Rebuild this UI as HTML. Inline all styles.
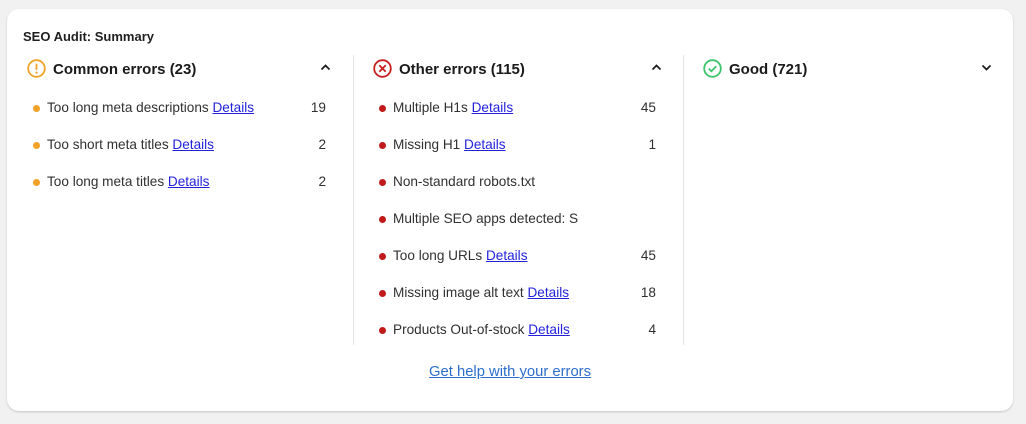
<!DOCTYPE html>
<html><head><style>
body{margin:0;width:1026px;height:424px;background:#f1f1f2;font-family:"Liberation Sans",sans-serif;color:#303030;position:relative;overflow:hidden}
.card{position:absolute;left:7px;top:9px;width:1006px;height:402px;background:#fff;border-radius:12px;box-shadow:0 1px 2px rgba(0,0,0,.18)}
.a{position:absolute;white-space:nowrap}
.t{left:23px;top:29px;font-size:13px;font-weight:bold;color:#1f1f1f}
.h{font-size:15px;font-weight:bold;color:#1a1a1a;top:61px}
.i{font-size:13.6px;color:#303030}
.i a,.lk{color:#2222dd;text-decoration:underline}
.d{position:absolute;width:7px;height:7px;border-radius:50%}
.n{font-size:13.6px;color:#303030;text-align:right;width:30px}
.v{position:absolute;width:1px;background:#e3e3e3;top:55px;height:290px}
svg{position:absolute}
</style></head><body>
<div class="card"></div>
<div class="a t">SEO Audit: Summary</div>
<div class="v" style="left:353px"></div><div class="v" style="left:683px"></div>

<svg style="left:27px;top:59px" width="19" height="19" viewBox="0 0 19 19"><circle cx="9.5" cy="9.5" r="8.3" fill="none" stroke="#f0a326" stroke-width="1.8"/><rect x="8.6" y="4.5" width="1.8" height="6.5" rx=".9" fill="#f0a326"/><circle cx="9.5" cy="13.6" r="1.1" fill="#f0a326"/></svg>
<div class="a h" style="left:53px">Common errors (23)</div>
<svg style="left:320px;top:63px" width="11" height="8" viewBox="0 0 11 8"><path d="M1.5 6.5L5.5 2.5L9.5 6.5" fill="none" stroke="#1a1a1a" stroke-width="1.7"/></svg>

<svg style="left:373px;top:59px" width="19" height="19" viewBox="0 0 19 19"><circle cx="9.5" cy="9.5" r="8.3" fill="none" stroke="#c81f1f" stroke-width="1.8"/><path d="M6.3 6.3L12.7 12.7M12.7 6.3L6.3 12.7" stroke="#c81f1f" stroke-width="1.8"/></svg>
<div class="a h" style="left:399px">Other errors (115)</div>
<svg style="left:651px;top:63px" width="11" height="8" viewBox="0 0 11 8"><path d="M1.5 6.5L5.5 2.5L9.5 6.5" fill="none" stroke="#1a1a1a" stroke-width="1.7"/></svg>

<svg style="left:703px;top:59px" width="19" height="19" viewBox="0 0 19 19"><circle cx="9.5" cy="9.5" r="8.3" fill="none" stroke="#3cc46a" stroke-width="1.8"/><path d="M5.8 9.7L8.4 12.2L13.2 7.2" fill="none" stroke="#3cc46a" stroke-width="1.8"/></svg>
<div class="a h" style="left:729px">Good (721)</div>
<svg style="left:981px;top:64px" width="11" height="8" viewBox="0 0 11 8"><path d="M1.5 1.5L5.5 5.5L9.5 1.5" fill="none" stroke="#1a1a1a" stroke-width="1.7"/></svg>

<div class="d" style="left:33px;top:105px;background:#f0a326"></div><div class="a i" style="left:47px;top:100px">Too long meta descriptions <a>Details</a></div><div class="a n" style="left:296px;top:100px">19</div>
<div class="d" style="left:33px;top:142px;background:#f0a326"></div><div class="a i" style="left:47px;top:137px">Too short meta titles <a>Details</a></div><div class="a n" style="left:296px;top:137px">2</div>
<div class="d" style="left:33px;top:179px;background:#f0a326"></div><div class="a i" style="left:47px;top:174px">Too long meta titles <a>Details</a></div><div class="a n" style="left:296px;top:174px">2</div>

<div class="d" style="left:379px;top:105px;background:#c01a1a"></div><div class="a i" style="left:393px;top:100px">Multiple H1s <a>Details</a></div><div class="a n" style="left:626px;top:100px">45</div>
<div class="d" style="left:379px;top:142px;background:#c01a1a"></div><div class="a i" style="left:393px;top:137px">Missing H1 <a>Details</a></div><div class="a n" style="left:626px;top:137px">1</div>
<div class="d" style="left:379px;top:179px;background:#c01a1a"></div><div class="a i" style="left:393px;top:174px">Non-standard robots.txt</div>
<div class="d" style="left:379px;top:216px;background:#c01a1a"></div><div class="a i" style="left:393px;top:211px">Multiple SEO apps detected: S</div>
<div class="d" style="left:379px;top:253px;background:#c01a1a"></div><div class="a i" style="left:393px;top:248px">Too long URLs <a>Details</a></div><div class="a n" style="left:626px;top:248px">45</div>
<div class="d" style="left:379px;top:290px;background:#c01a1a"></div><div class="a i" style="left:393px;top:285px">Missing image alt text <a>Details</a></div><div class="a n" style="left:626px;top:285px">18</div>
<div class="d" style="left:379px;top:327px;background:#c01a1a"></div><div class="a i" style="left:393px;top:322px">Products Out-of-stock <a>Details</a></div><div class="a n" style="left:626px;top:322px">4</div>

<div class="a lk" style="left:429px;top:364px;font-size:14.8px;color:#2c6ecb">Get help with your errors</div>
</body></html>
